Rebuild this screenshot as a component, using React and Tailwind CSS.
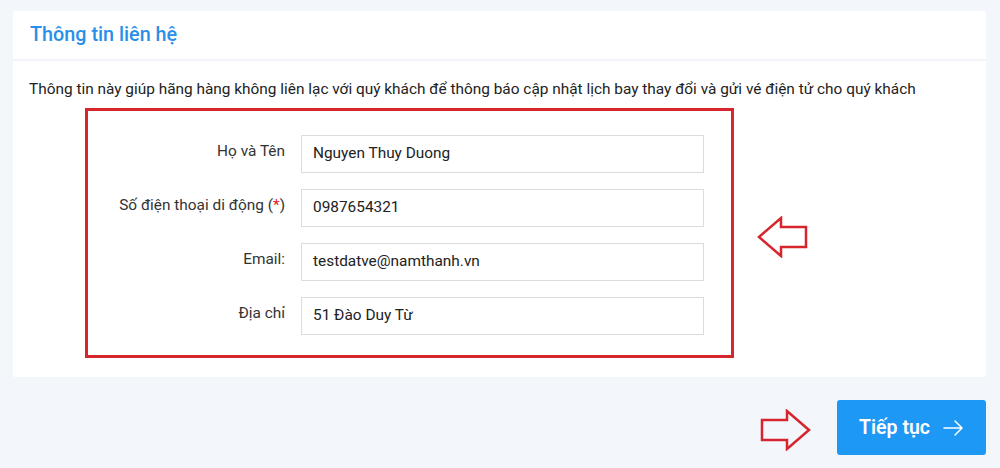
import React from 'react'

const fields = [
  { label: 'Họ và Tên', value: 'Nguyen Thuy Duong' },
  { label: 'Số điện thoại di động', value: '0987654321', required: true },
  { label: 'Email:', value: 'testdatve@namthanh.vn' },
  { label: 'Địa chỉ', value: '51 Đào Duy Từ' },
]

const OutlineArrow = ({ dir = 'left' }) => (
  <svg width="52" height="42" viewBox="0 0 52 42" fill="none">
    <path
      d={
        dir === 'left'
          ? 'M2 21 L24 2 L24 11 L49 11 L49 31 L24 31 L24 40 Z'
          : 'M50 21 L28 2 L28 11 L3 11 L3 31 L28 31 L28 40 Z'
      }
      stroke="#d6252d"
      strokeWidth="2.5"
      strokeLinejoin="miter"
    />
  </svg>
)

const App = () => {
  return (
    <div
      className="w-[1000px] h-[468px] bg-[#f3f6fb] pt-[11px] pl-[13px] overflow-hidden"
      style={{ fontFamily: 'Roboto, "Noto Sans", sans-serif' }}
    >
      <section className="w-[973px] h-[366px] bg-white rounded-[2px]">
        <div className="h-[50px] flex items-center px-[17px] border-b-2 border-[#f1f4f8]">
          <h2 className="text-[19.8px] font-medium text-[#2a8fe8]">Thông tin liên hệ</h2>
        </div>
        <p className="mt-[17px] px-[16px] text-[15.4px] leading-[22px] text-[#222]">
          Thông tin này giúp hãng hàng không liên lạc với quý khách để thông báo cập nhật lịch bay thay đổi và gửi vé điện tử cho quý khách
        </p>
        <div className="flex items-center mt-[8px]">
          <div className="ml-[72px] w-[649px] h-[250px] border-[3px] border-[#d6252d] pt-[24px] flex flex-col gap-[16px]">
            {fields.map((f) => (
              <div key={f.label} className="flex items-center">
                <label className="w-[213px] text-right text-[15.4px] text-[#333] pr-[16px] -mt-[5px]">
                  {f.label}
                  {f.required && (
                    <>
                      {' ('}
                      <span className="text-[#e02020]">*</span>
                      {')'}
                    </>
                  )}
                </label>
                <div className="w-[403px] h-[38px] border border-[#dcdcdc] flex items-center px-[11px] text-[15.4px] text-[#222]">
                  {f.value}
                </div>
              </div>
            ))}
          </div>
          <div className="ml-[23px] mt-[8px]">
            <OutlineArrow dir="left" />
          </div>
        </div>
      </section>
      <div className="flex items-center justify-end w-[973px] mt-[23px]">
        <div className="mr-[26px] mt-[4px]">
          <OutlineArrow dir="right" />
        </div>
        <button className="w-[149px] h-[55px] bg-[#1e98f5] rounded-[3px] text-white text-[19.5px] font-semibold flex items-center justify-center gap-[13px]">
          Tiếp tục
          <svg width="21" height="18" viewBox="0 0 21 18" fill="none" stroke="white" strokeWidth="1.5" strokeLinecap="round" strokeLinejoin="round">
            <path d="M1 9 H19 M12 2 L19 9 L12 16" />
          </svg>
        </button>
      </div>
    </div>
  )
}

export default App
